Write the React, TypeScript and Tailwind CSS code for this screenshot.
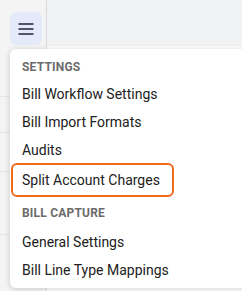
import React from 'react';

const settingsItems = ['Bill Workflow Settings', 'Bill Import Formats', 'Audits'];
const captureItems = ['General Settings', 'Bill Line Type Mappings'];

const MenuItem: React.FC<{ label: string }> = ({ label }) => (
  <div className="h-[28px] flex items-center px-[12px] text-[14px] text-[#212121] whitespace-nowrap">{label}</div>
);

const App: React.FC = () => {
  return (
    <div className="relative w-[242px] h-[291px] overflow-hidden bg-white font-['Roboto',sans-serif]">
      <div className="flex h-full">
        <div className="w-[47px] h-full bg-[#f4f4f5] border-r border-[#e2e2e4] flex flex-col">
          <div className="h-[97px] border-b border-[#e6e6e8]" />
          <div className="h-[36px] border-b border-[#e6e6e8]" />
          <div className="h-[39px] border-b border-[#e6e6e8]" />
          <div className="h-[63px] border-b border-[#e6e6e8]" />
          <div className="flex-1" />
        </div>
        <div className="flex-1 flex flex-col">
          <div className="h-[46px] bg-[#f1f2f4] shadow-[0_2px_3px_rgba(0,0,0,0.08)]" />
          <div className="flex-1 bg-white" />
        </div>
      </div>

      <button className="absolute left-[10px] top-[12px] w-[32px] h-[33px] rounded-[6px] bg-[#e4eaf9] flex items-center justify-center">
        <svg width="16" height="12" viewBox="0 0 16 12" fill="none">
          <rect x="0.5" y="0" width="15" height="2" fill="#4f5566" />
          <rect x="0.5" y="5" width="15" height="2" fill="#4f5566" />
          <rect x="0.5" y="10" width="15" height="2" fill="#4f5566" />
        </svg>
      </button>

      <div className="absolute left-[10px] top-[49px] w-[240px] h-[239px] bg-white rounded-[6px] shadow-[0_1px_6px_rgba(0,0,0,0.18)] pt-[8px]">
        <div className="h-[20px] flex items-center px-[12px] text-[12px] font-bold text-[#6b6b6b] tracking-[0.2px]">SETTINGS</div>
        <div className="mt-[3px]">
          {settingsItems.map((item) => (
            <MenuItem key={item} label={item} />
          ))}
        </div>
        <div className="-mt-[1px] ml-[1px] w-[163px] h-[34px] border-2 border-[#f26a1b] rounded-[6px] flex items-center pl-[9px] text-[14px] text-[#212121] whitespace-nowrap">
          Split Account Charges
        </div>
        <div className="mt-[6px] h-[20px] flex items-center px-[12px] text-[12px] font-bold text-[#6b6b6b] tracking-[0.2px]">BILL CAPTURE</div>
        <div className="mt-[5px]">
          {captureItems.map((item) => (
            <MenuItem key={item} label={item} />
          ))}
        </div>
      </div>
    </div>
  );
};

export default App;
